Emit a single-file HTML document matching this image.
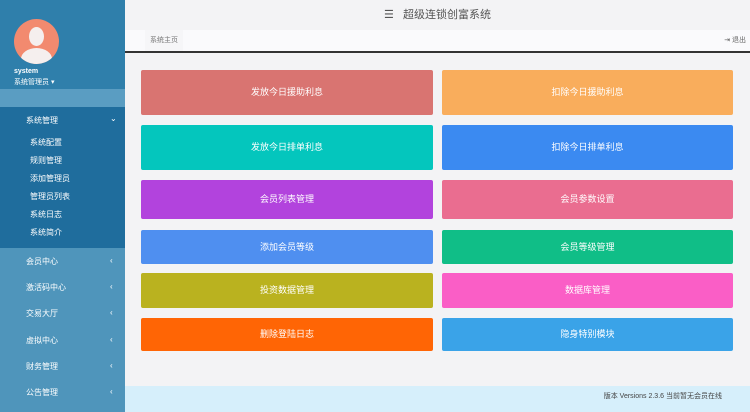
<!DOCTYPE html><html><head><meta charset="utf-8"><style>
body{margin:0;width:750px;height:412px;overflow:hidden;background:#f3f3f5;font-family:"Liberation Sans","Noto Sans CJK SC",sans-serif;position:relative}
.sb{position:absolute;left:0;top:0;width:125px;height:412px;background:#4f95bb}
.top{position:absolute;left:0;top:0;width:125px;height:89px;background:#2f7fab}
.strip{position:absolute;left:0;top:89px;width:125px;height:18px;background:#5a9dc2}
.sub{position:absolute;left:0;top:107px;width:125px;height:141px;background:#1f6d9d}
.av{position:absolute;left:14px;top:19px;width:45px;height:45px;border-radius:50%;background:#f28a6f;overflow:hidden}
.av:before{content:"";position:absolute;left:15px;top:8px;width:15px;height:19px;border-radius:50%;background:#f5efee}
.av:after{content:"";position:absolute;left:7px;top:29px;width:31px;height:22px;border-radius:50% 50% 0 0;background:#f5efee}
.t{position:absolute;color:#fff;font-size:8px;white-space:nowrap}
.arr{position:absolute;left:110px;color:#fff;font-size:8px}
.hdr{position:absolute;left:125px;top:0;width:625px;height:30px;background:#f3f3f5;text-align:center;line-height:30px;font-size:11px;color:#555}
.tab{position:absolute;left:125px;top:30px;width:625px;height:21px;background:#fafafc;border-bottom:2px solid #333}
.b{position:absolute;color:#fff;font-size:9px;text-align:center;border-radius:2px}
.ft{position:absolute;left:125px;top:386px;width:625px;height:26px;background:#d6effb;font-size:7px;color:#444;text-align:right;line-height:22px}
</style></head><body>
<div class="sb"></div><div class="top"></div><div class="strip"></div><div class="sub"></div>
<div class="av"></div>
<div class="t" style="left:14px;top:68px;font-weight:bold;font-size:7px">system</div>
<div class="t" style="left:14px;top:77px;font-size:7px">系统管理员 ▾</div>
<div class="t" style="left:26px;top:115px">系统管理</div><div class="arr" style="top:114px">⌄</div>
<div class="t" style="left:30px;top:137px">系统配置</div>
<div class="t" style="left:30px;top:155px">规则管理</div>
<div class="t" style="left:30px;top:173px">添加管理员</div>
<div class="t" style="left:30px;top:191px">管理员列表</div>
<div class="t" style="left:30px;top:209px">系统日志</div>
<div class="t" style="left:30px;top:227px">系统简介</div>
<div class="t" style="left:26px;top:256px">会员中心</div><div class="arr" style="top:256px">‹</div>
<div class="t" style="left:26px;top:282px">激活码中心</div><div class="arr" style="top:282px">‹</div>
<div class="t" style="left:26px;top:308px">交易大厅</div><div class="arr" style="top:308px">‹</div>
<div class="t" style="left:26px;top:335px">虚拟中心</div><div class="arr" style="top:335px">‹</div>
<div class="t" style="left:26px;top:361px">财务管理</div><div class="arr" style="top:361px">‹</div>
<div class="t" style="left:26px;top:387px">公告管理</div><div class="arr" style="top:387px">‹</div>
<div class="hdr">☰&nbsp;&nbsp; 超级连锁创富系统</div>
<div class="tab"><div style="position:absolute;left:20px;top:0;width:38px;height:21px;background:#f6f6f8;font-size:7px;color:#777;line-height:21px;text-align:center">系统主页</div><div style="position:absolute;right:4px;top:0;font-size:7px;color:#666;line-height:21px">⇥ 退出</div></div>
<div class="b" style="left:141px;top:70px;width:292px;height:45px;line-height:45px;background:#d97471">发放今日援助利息</div>
<div class="b" style="left:442px;top:70px;width:291px;height:45px;line-height:45px;background:#f9ad5c">扣除今日援助利息</div>
<div class="b" style="left:141px;top:125px;width:292px;height:45px;line-height:45px;background:#04c6bd">发放今日排单利息</div>
<div class="b" style="left:442px;top:125px;width:291px;height:45px;line-height:45px;background:#3b8af1">扣除今日排单利息</div>
<div class="b" style="left:141px;top:180px;width:292px;height:39px;line-height:39px;background:#b243dd">会员列表管理</div>
<div class="b" style="left:442px;top:180px;width:291px;height:39px;line-height:39px;background:#ea6d90">会员参数设置</div>
<div class="b" style="left:141px;top:230px;width:292px;height:34px;line-height:34px;background:#4f8ff0">添加会员等级</div>
<div class="b" style="left:442px;top:230px;width:291px;height:34px;line-height:34px;background:#10be87">会员等级管理</div>
<div class="b" style="left:141px;top:273px;width:292px;height:35px;line-height:35px;background:#bab21f">投资数据管理</div>
<div class="b" style="left:442px;top:273px;width:291px;height:35px;line-height:35px;background:#fa5ec6">数据库管理</div>
<div class="b" style="left:141px;top:318px;width:292px;height:33px;line-height:33px;background:#ff6505">删除登陆日志</div>
<div class="b" style="left:442px;top:318px;width:291px;height:33px;line-height:33px;background:#3aa3e8">隐身特别模块</div>
<div class="ft"><span style="margin-right:28px">版本 Versions 2.3.6 当前暂无会员在线</span></div>
</body></html>
